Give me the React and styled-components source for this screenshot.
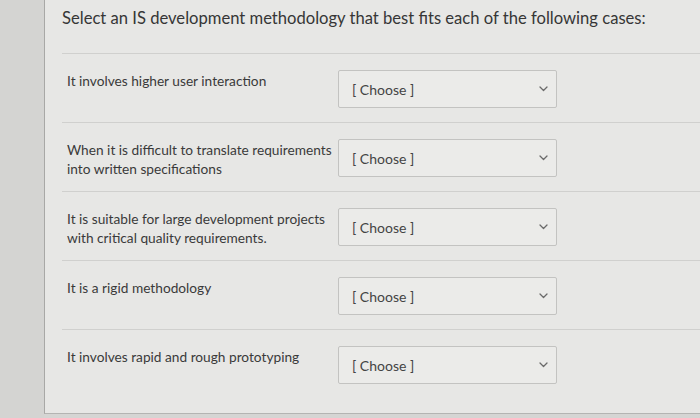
import React from 'react';
import styled, { createGlobalStyle } from 'styled-components';

const cases = [
  'It involves higher user interaction',
  'When it is difficult to translate requirements into written specifications',
  'It is suitable for large development projects with critical quality requirements.',
  'It is a rigid methodology',
  'It involves rapid and rough prototyping',
];

const GlobalStyle = createGlobalStyle`
  body {
    margin: 0;
    background: #d5d5d3;
    font-family: Lato, 'Open Sans', sans-serif;
  }
`;

const Chevron = () => (
  <svg width="9" height="6" viewBox="0 0 9 6" fill="none">
    <path d="M1 1l3.5 3.5L8 1" stroke="#6a6a6a" strokeWidth="1.3" strokeLinecap="round" strokeLinejoin="round" />
  </svg>
);

class App extends React.Component {
  render() {
    return (
      <Wrapper>
        <GlobalStyle />
        <Gutter />
        <Panel>
          <Heading>Select an IS development methodology that best fits each of the following cases:</Heading>
          {cases.map((text, i) => (
            <Row key={i} last={i === cases.length - 1}>
              <Label>{text}</Label>
              <Select>
                <span>[ Choose ]</span>
                <Chevron />
              </Select>
            </Row>
          ))}
        </Panel>
      </Wrapper>
    );
  }
}

const Wrapper = styled.div`
  display: flex;
  width: 700px;
  height: 418px;
  overflow: hidden;
`;

const Gutter = styled.div`
  width: 44px;
  flex-shrink: 0;
  background: #d4d4d2;
`;

const Panel = styled.div`
  flex: 1;
  height: 414px;
  box-sizing: border-box;
  background: #e7e7e5;
  border-left: 1px solid #a8a8a6;
  border-bottom: 1px solid #b4b4b2;
  padding-left: 17px;
`;

const Heading = styled.div`
  font-size: 16.6px;
  line-height: 24px;
  color: #363636;
  padding-top: 6px;
  height: 47px;
  border-bottom: 1px solid #d0d0ce;
  white-space: nowrap;
`;

const Row = styled.div`
  display: grid;
  grid-template-columns: 271px 219px;
  align-items: start;
  padding: 16px 0 14px 5px;
  height: ${p => (p.last ? 'auto' : '38px')};
  border-bottom: ${p => (p.last ? 'none' : '1px solid #d0d0ce')};
`;

const Label = styled.div`
  font-size: 13.7px;
  line-height: 19px;
  color: #3a3a3a;
  padding-top: 1px;
`;

const Select = styled.div`
  box-sizing: border-box;
  height: 38px;
  display: flex;
  align-items: center;
  justify-content: space-between;
  padding: 0 8px 0 13px;
  background: #ebebe9;
  border: 1px solid #c3c3c1;
  border-radius: 2px;
  font-size: 14px;
  color: #444;
`;

export default App;
